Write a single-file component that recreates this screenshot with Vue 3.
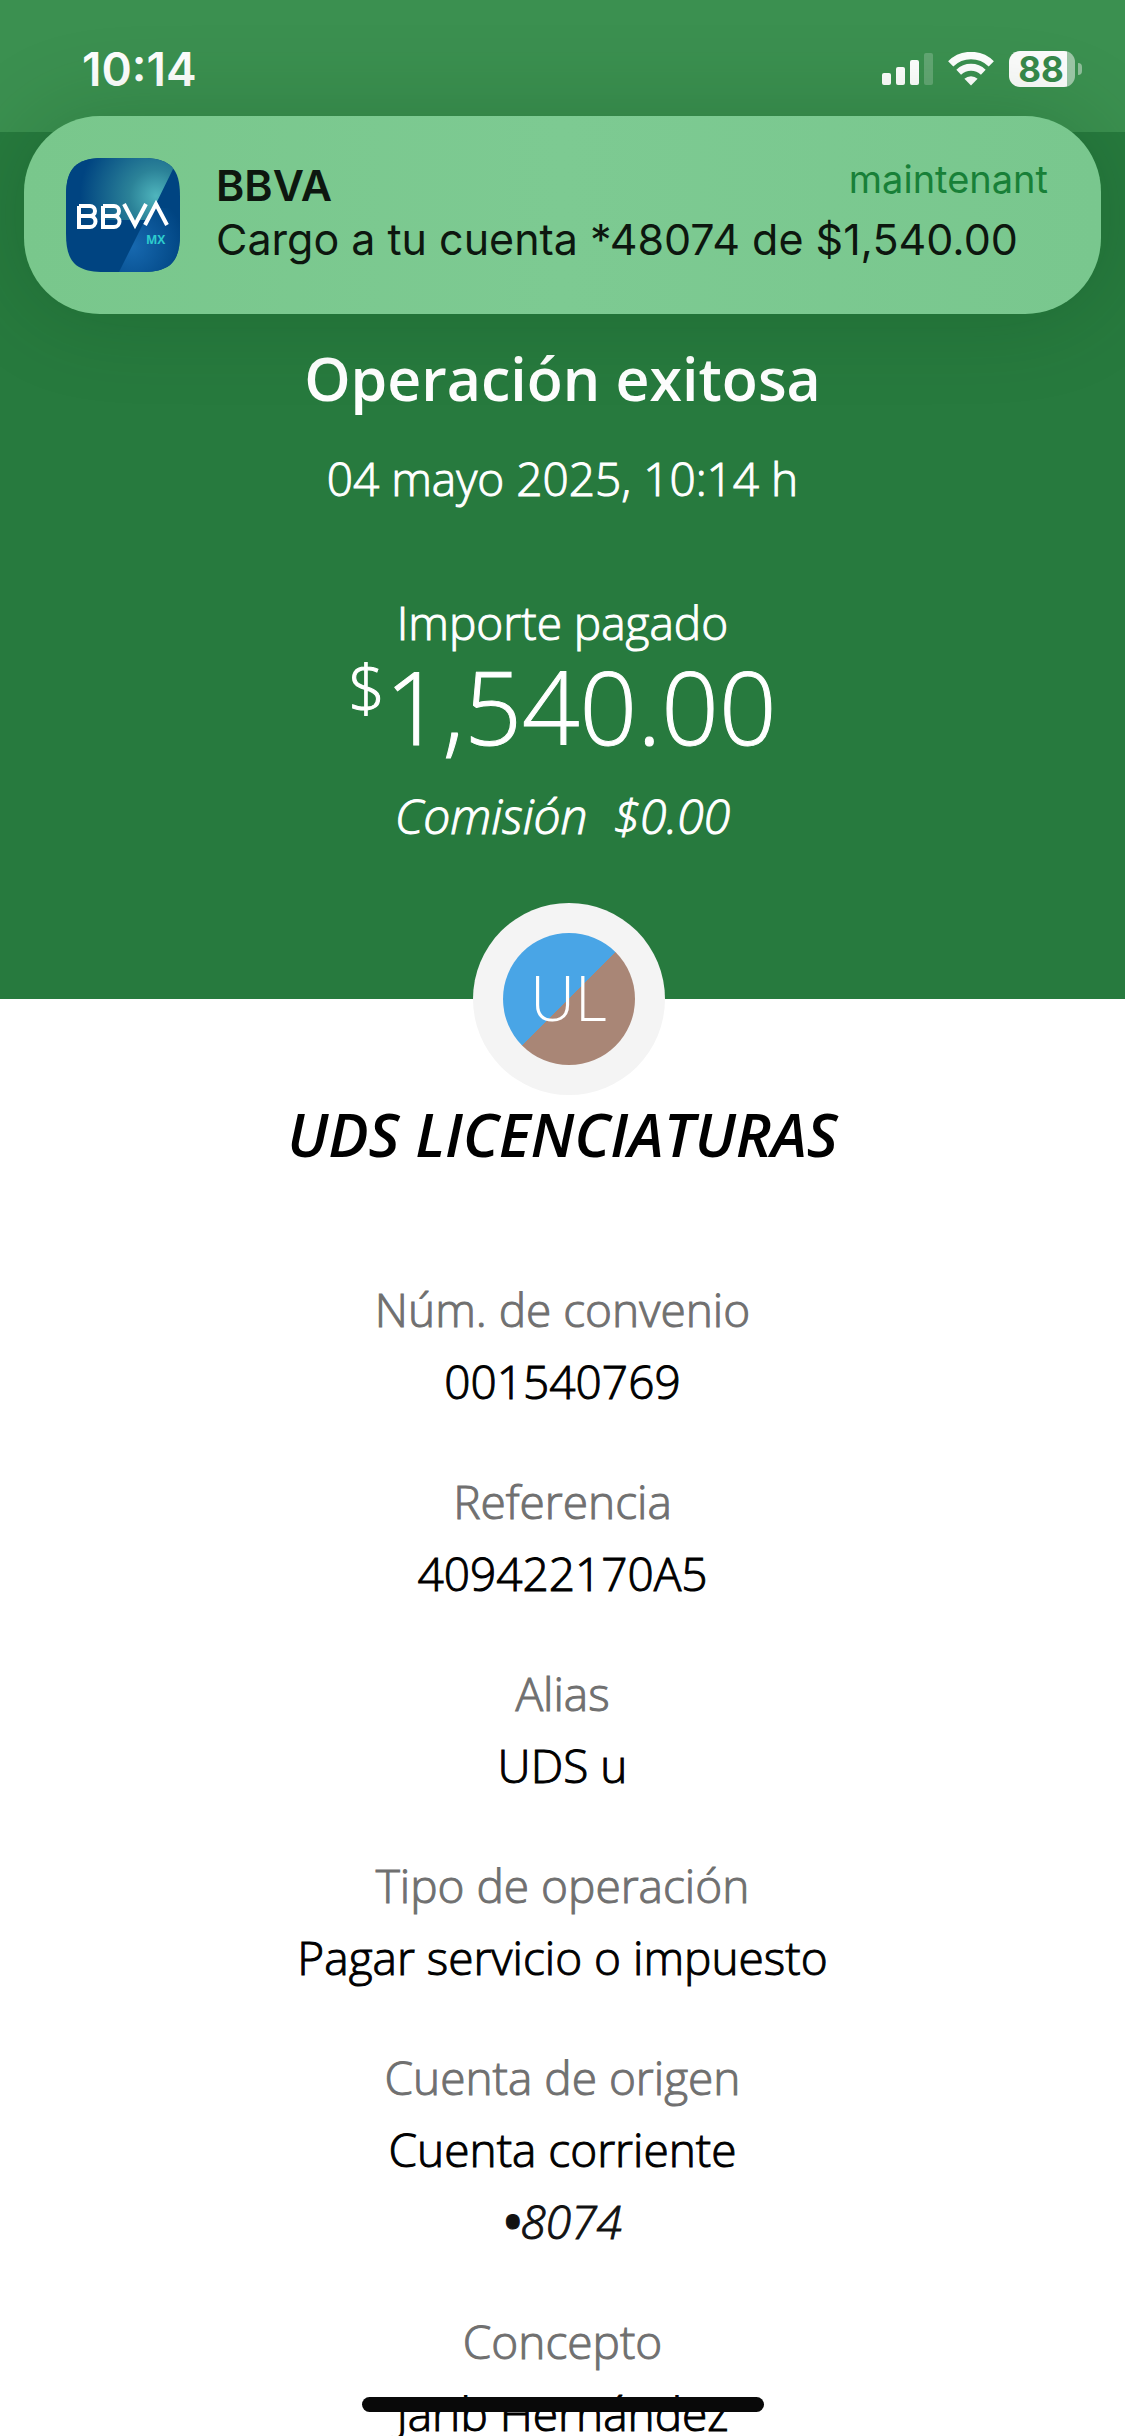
<script setup>
const details = [
  { label: 'Núm. de convenio', value: '001540769' },
  { label: 'Referencia', value: '409422170A5' },
  { label: 'Alias', value: 'UDS u' },
  { label: 'Tipo de operación', value: 'Pagar servicio o impuesto' },
  { label: 'Cuenta de origen', value: 'Cuenta corriente', account: '8074' },
  { label: 'Concepto', value: 'Jarib Hernández' },
]
</script>

<template>
  <div class="screen">
    <header class="hero">
      <div class="status">
        <span class="time">10:14</span>
        <div class="status-icons">
          <svg class="signal" width="51" height="32" viewBox="0 0 51 32" fill="#fff" aria-label="Señal">
            <rect x="0" y="20" width="9" height="12" rx="2" />
            <rect x="14" y="14" width="9" height="18" rx="2" />
            <rect x="28" y="7" width="9" height="25" rx="2" />
            <rect x="42" y="0" width="9" height="32" rx="2" opacity="0.2" />
          </svg>
          <svg class="wifi" width="46" height="34" viewBox="0 0 46 34" aria-label="Wi-Fi">
            <g fill="none" stroke="#fff">
              <path d="M2.7 11.8A29 29 0 0 1 43.3 11.8" stroke-width="7.4" />
              <path d="M10.7 20.2A17.8 17.8 0 0 1 35.3 20.2" stroke-width="6.8" />
            </g>
            <path d="M23 33.6L16.4 26.8A9.6 9.6 0 0 1 29.6 26.8Z" fill="#fff" />
          </svg>
          <div class="battery">
            <span class="battery-body">88</span>
            <span class="battery-tip"></span>
          </div>
        </div>
      </div>

      <h1 class="title">Operación exitosa</h1>
      <p class="date">04 mayo 2025, 10:14 h</p>
      <p class="paid">Importe pagado</p>
      <p class="amount"><span class="currency">$</span><span>1,540.00</span></p>
      <p class="fee"><span>Comisión</span><span>$0.00</span></p>
    </header>

    <main class="body">
      <div class="avatar"><span class="initials">UL</span></div>
      <h2 class="payee">UDS LICENCIATURAS</h2>
      <dl class="details">
        <div v-for="item in details" :key="item.label" class="detail">
          <dt>{{ item.label }}</dt>
          <dd>{{ item.value }}</dd>
          <dd v-if="item.account" class="account"><b>•</b>{{ item.account }}</dd>
        </div>
      </dl>
    </main>

    <aside class="notification">
      <svg class="app-icon" width="114" height="114" viewBox="0 0 114 114" role="img" aria-label="BBVA MX">
        <defs>
          <clipPath id="tile"><path d="M0 38C0 10 10 0 38 0H76C104 0 114 10 114 38V76C114 104 104 114 76 114H38C10 114 0 104 0 76Z" /></clipPath>
          <radialGradient id="glow" gradientUnits="userSpaceOnUse" cx="90" cy="38" r="76">
            <stop offset="0" stop-color="#4fb5bd" />
            <stop offset="0.35" stop-color="#2b8298" />
            <stop offset="1" stop-color="#004481" />
          </radialGradient>
          <radialGradient id="beam" gradientUnits="userSpaceOnUse" cx="66" cy="88" r="54">
            <stop offset="0" stop-color="#1769b0" />
            <stop offset="1" stop-color="#004481" />
          </radialGradient>
        </defs>
        <g clip-path="url(#tile)">
          <rect width="114" height="114" fill="#004481" />
          <path d="M0 0H114L108 9L82 62H0Z" fill="url(#glow)" />
          <path d="M77 66L53 114H114V50H86Z" fill="url(#beam)" />
        </g>
        <g fill="none" stroke="#fff" stroke-width="4">
          <path d="M13 48H24A5 5 0 0 1 24 58H13M24 58A5.500 5.500 0 0 1 24 69H13V48" />
          <path d="M37 48H48A5 5 0 0 1 48 58H37M48 58A5.500 5.500 0 0 1 48 69H37V48" />
          <path d="M58 46L69 67L80 46" />
          <path d="M79 67L90 46L101 67" />
        </g>
        <text x="80" y="86" class="icon-region">MX</text>
      </svg>
      <div class="notification-text">
        <div class="notification-head">
          <strong>BBVA</strong>
          <time>maintenant</time>
        </div>
        <p>Cargo a tu cuenta *48074 de $1,540.00</p>
      </div>
    </aside>

    <div class="home-indicator"></div>
  </div>
</template>

<style>
body {
  margin: 0;
  background: #fff;
}
</style>

<style scoped>
.screen {
  position: relative;
  height: 100vh;
  overflow: hidden;
  font-family: "Open Sans", "Noto Sans", sans-serif;
  font-size: 46px;
  font-weight: 300;
  line-height: 72px;
  color: #000;
  text-align: center;
}

h1, h2, p, dl, dd {
  margin: 0;
}

.hero {
  display: flex;
  flex-direction: column;
  background: #277a3e;
  color: #fff;
}

.status {
  display: flex;
  justify-content: space-between;
  align-items: flex-start;
  box-sizing: border-box;
  height: 132px;
  padding: 45px 43px 0 82px;
  background: #3b9050;
  font-family: Inter, sans-serif;
}

.time {
  font-size: 46px;
  font-weight: 600;
  line-height: 48px;
}

.status-icons {
  display: flex;
  align-items: center;
  gap: 15px;
  height: 48px;
}

.battery {
  display: flex;
  align-items: center;
  gap: 3px;
}

.battery-body {
  width: 66px;
  height: 36px;
  border-radius: 11px;
  background: linear-gradient(90deg, #fcfcfc 58px, #9dc7a7 58px);
  color: #37894b;
  font-size: 35px;
  font-weight: 700;
  line-height: 36px;
  text-indent: -2px;
}

.battery-tip {
  width: 4px;
  height: 12px;
  border-radius: 0 4px 4px 0;
  background: #8fbe9a;
}

.title {
  margin-top: 204px;
  font-size: 59px;
  font-weight: 600;
  line-height: 84px;
}

.date {
  margin-top: 22px;
}

.paid {
  margin-top: 72px;
}

.date, .paid, .amount, .fee, .details {
  -webkit-text-stroke: 1px currentColor;
}

.amount {
  display: flex;
  justify-content: center;
  font-size: 101px;
  line-height: 96px;
}

.currency {
  font-size: 64px;
  line-height: 60px;
}

.fee {
  display: flex;
  justify-content: center;
  gap: 26px;
  margin-top: 26px;
  padding-bottom: 147px;
  font-size: 48px;
  font-style: italic;
}

.body {
  display: flex;
  flex-direction: column;
  align-items: center;
}

.avatar {
  display: flex;
  box-sizing: border-box;
  width: 192px;
  height: 192px;
  margin: -96px 0 0 12px;
  padding: 30px;
  border-radius: 50%;
  background: #f4f4f4;
}

.initials {
  flex: 1;
  border-radius: 50%;
  background: linear-gradient(135deg, #49a5e6 50%, #a98676 50%);
  color: #fff;
  font-size: 62px;
  line-height: 128px;
}

.payee {
  font-size: 60px;
  font-style: italic;
  font-weight: 600;
  line-height: 78px;
}

.details {
  display: flex;
  flex-direction: column;
  gap: 48px;
  margin-top: 100px;
}

dt {
  color: #707070;
}

.account {
  color: #121212;
  font-style: italic;
}

.account b {
  font-weight: 700;
}

.notification {
  position: absolute;
  top: 116px;
  left: 24px;
  right: 24px;
  display: flex;
  align-items: center;
  gap: 36px;
  box-sizing: border-box;
  height: 198px;
  padding: 0 53px 0 42px;
  border-radius: 76px;
  background: linear-gradient(90deg, #79c78c, #7dca92 50%, #79c78e);
  box-shadow: 0 0 90px rgba(0, 60, 20, 0.22);
  color: #0d170f;
  font-family: Inter, sans-serif;
  font-size: 43px;
  font-weight: 400;
  line-height: 54px;
  text-align: left;
}

.app-icon {
  flex: none;
}

.icon-region {
  fill: #2dcccd;
  font: 700 12px "Open Sans", sans-serif;
}

.notification-text {
  flex: 1;
  padding-bottom: 6px;
  white-space: nowrap;
}

.notification-head {
  display: flex;
  justify-content: space-between;
}

.notification-head strong {
  font-weight: 600;
}

.notification-head time {
  color: #188038;
  font-size: 38px;
  line-height: 42px;
}

.home-indicator {
  position: absolute;
  bottom: 24px;
  left: 50%;
  width: 402px;
  height: 15px;
  margin-left: -201px;
  border-radius: 8px;
  background: #090909;
}
</style>
